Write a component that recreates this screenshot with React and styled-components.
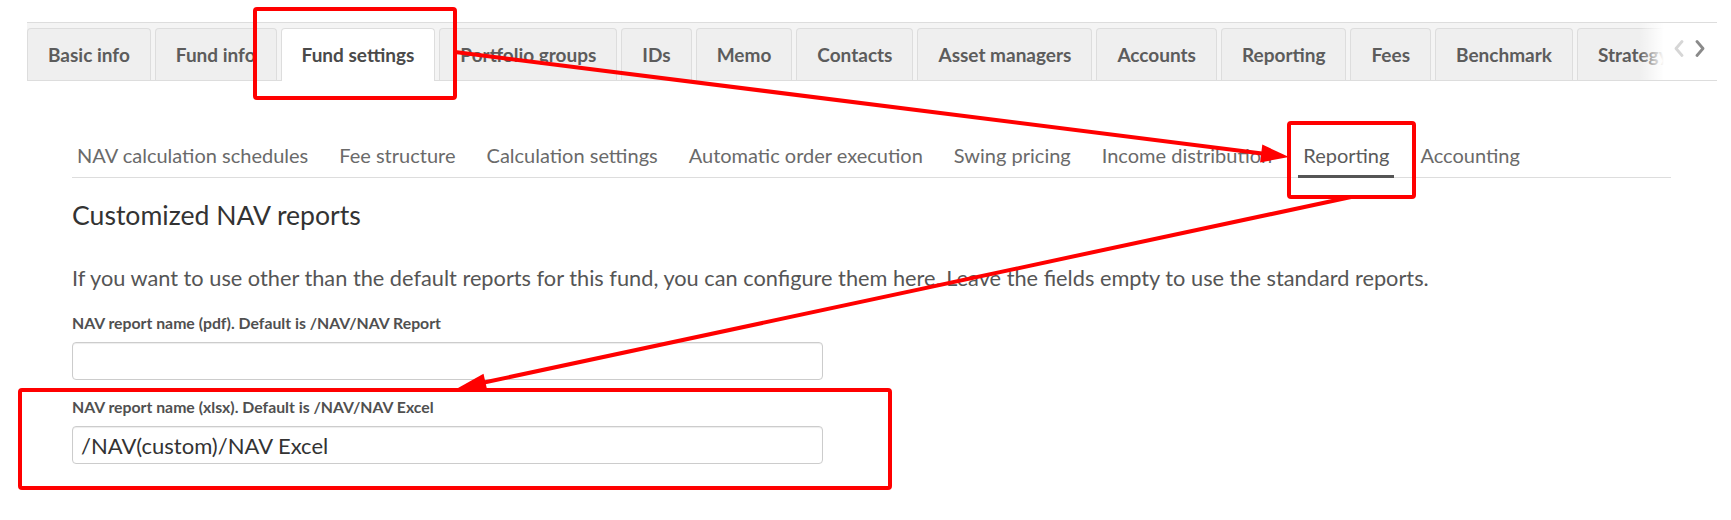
import React from 'react';
import styled, { createGlobalStyle } from 'styled-components';

const GlobalStyle = createGlobalStyle`
  html, body { margin: 0; padding: 0; background: #fff; }
  body { font-family: Lato, "Open Sans", "Liberation Sans", sans-serif; color: #555; }
  * { box-sizing: border-box; }
`;

const Page = styled.div`
  position: relative;
  width: 1731px;
  height: 520px;
  padding: 22px 14px 0 27px;
  overflow: hidden;
`;

const TabStrip = styled.div`
  position: relative;
  display: flex;
  gap: 4px;
  height: 59px;
  padding-top: 5px;
  border-top: 1px solid #dddddd;
  background: #f4f4f4;
  overflow: hidden;
  &::after {
    content: '';
    position: absolute;
    left: 0;
    right: 0;
    bottom: 0;
    height: 1px;
    background: #dddddd;
  }
`;

const Tab = styled.div`
  position: relative;
  z-index: ${(p) => (p.$active ? 1 : 'auto')};
  flex: none;
  display: flex;
  align-items: center;
  height: 53px;
  padding: 0 20px 1px;
  border: 1px solid #dddddd;
  border-bottom: none;
  border-radius: 4px 4px 0 0;
  background: ${(p) => (p.$active ? '#ffffff' : '#efefef')};
  color: ${(p) => (p.$active ? '#4a4a4a' : '#5c5c5c')};
  font-size: 19px;
  font-weight: 700;
  white-space: nowrap;
`;

const ScrollFade = styled.div`
  position: absolute;
  z-index: 2;
  top: 0;
  right: 0;
  bottom: 1px;
  width: 78px;
  display: flex;
  align-items: center;
  justify-content: flex-end;
  gap: 11px;
  padding: 0 12px 6px 0;
  background: linear-gradient(to right, rgba(255,255,255,0) 0%, #ffffff 32%, #ffffff 100%);
`;

const Chevron = ({ dir, color }) => (
  <svg width="10" height="17" viewBox="0 0 10 17">
    <polyline
      points={dir === 'left' ? '8,1.5 2,8.5 8,15.5' : '2,1.5 8,8.5 2,15.5'}
      fill="none"
      stroke={color}
      strokeWidth="2.8"
      strokeLinecap="round"
      strokeLinejoin="round"
    />
  </svg>
);

const Content = styled.div`
  padding: 0 46px 0 45px;
`;

const SubNav = styled.nav`
  display: flex;
  gap: 21px;
  margin-top: 62px;
  border-bottom: 1px solid #dddddd;
`;

const SubNavItem = styled.div`
  padding: 0 5px 8px;
  margin-bottom: -1px;
  border-bottom: 3px solid ${(p) => (p.$active ? '#555555' : 'transparent')};
  color: ${(p) => (p.$active ? '#5a5a5a' : '#6a6a6a')};
  font-size: 20px;
  line-height: 24px;
  white-space: nowrap;
`;

const Heading = styled.h3`
  margin: 22px 0 0;
  color: #333333;
  font-size: 26.6px;
  font-weight: 400;
  line-height: 30px;
`;

const Intro = styled.p`
  margin: 36px 0 0;
  color: #555555;
  font-size: 21.75px;
  line-height: 24px;
  white-space: nowrap;
`;

const Field = styled.div`
  display: flex;
  flex-direction: column;
  gap: 10px;
  margin-top: ${(p) => p.$gap}px;
`;

const Label = styled.label`
  color: #505050;
  font-size: 15.8px;
  font-weight: 700;
  line-height: 18px;
`;

const Input = styled.input`
  width: 751px;
  height: 38px;
  padding: 0 8px;
  border: 1px solid #cccccc;
  border-radius: 4px;
  box-shadow: inset 0 1px 1px rgba(0, 0, 0, 0.075);
  background: #fff;
  color: #333333;
  font-family: Lato, "Open Sans", sans-serif;
  font-size: 22px;
  outline: none;
`;

const Overlay = styled.svg`
  position: absolute;
  top: 0;
  left: 0;
  z-index: 5;
  pointer-events: none;
`;

const tabs = [
  'Basic info', 'Fund info', 'Fund settings', 'Portfolio groups', 'IDs', 'Memo',
  'Contacts', 'Asset managers', 'Accounts', 'Reporting', 'Fees', 'Benchmark', 'Strategy',
];

const subTabs = [
  'NAV calculation schedules', 'Fee structure', 'Calculation settings',
  'Automatic order execution', 'Swing pricing', 'Income distribution',
  'Reporting', 'Accounting',
];

const RED = '#ff0000';

export default function App() {
  return (
    <>
      <GlobalStyle />
      <Page>
        <TabStrip>
          {tabs.map((t) => (
            <Tab key={t} $active={t === 'Fund settings'}>{t}</Tab>
          ))}
          <ScrollFade>
            <Chevron dir="left" color="#d6d6d6" />
            <Chevron dir="right" color="#8a8a8a" />
          </ScrollFade>
        </TabStrip>
        <Content>
          <SubNav>
            {subTabs.map((t) => (
              <SubNavItem key={t} $active={t === 'Reporting'}>{t}</SubNavItem>
            ))}
          </SubNav>
          <Heading>Customized NAV reports</Heading>
          <Intro>
            If you want to use other than the default reports for this fund, you can configure them here. Leave the fields empty to use the standard reports.
          </Intro>
          <Field $gap={24}>
            <Label>NAV report name (pdf). Default is /NAV/NAV Report</Label>
            <Input defaultValue="" />
          </Field>
          <Field $gap={18}>
            <Label>NAV report name (xlsx). Default is /NAV/NAV Excel</Label>
            <Input defaultValue="/NAV(custom)/NAV Excel" />
          </Field>
        </Content>
        <Overlay width="1731" height="520" viewBox="0 0 1731 520">
          <g fill="none" stroke={RED} strokeWidth="4" strokeLinejoin="round">
            <rect x="255" y="9" width="200" height="89" rx="2" />
            <rect x="1289" y="123" width="125" height="74" rx="2" />
            <rect x="20" y="390" width="870" height="98" rx="2" />
            <line x1="455" y1="52" x2="1262" y2="153.5" />
            <line x1="1351" y1="197" x2="484" y2="382.5" />
          </g>
          <g fill={RED}>
            <polygon points="1289,157 1260.1,162.4 1262.3,144.6" />
            <polygon points="458,388 483.5,373.8 487.3,390.4" />
          </g>
        </Overlay>
      </Page>
    </>
  );
}
